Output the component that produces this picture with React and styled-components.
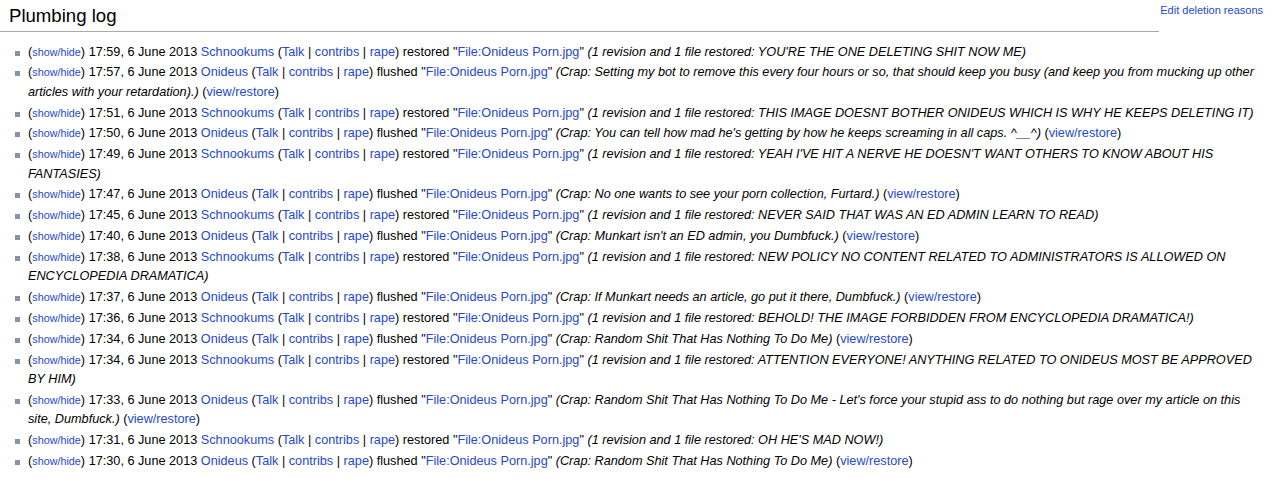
import React from 'react'
import styled, { createGlobalStyle } from 'styled-components'

const GlobalStyle = createGlobalStyle`
  html, body {
    margin: 0;
    padding: 0;
    background: #fff;
  }
  body {
    font-family: "Liberation Sans", Arial, Helvetica, sans-serif;
    color: #000;
  }
`

const LINK = '#2549cc'

const Page = styled.div`
  width: 1272px;
`

const Header = styled.div`
  display: flex;
  align-items: flex-start;
`

const Title = styled.h1`
  flex: 1;
  margin: 0;
  padding: 6px 0 5px 9px;
  font-size: 18.6px;
  line-height: 20px;
  font-weight: normal;
  border-bottom: 1px solid #aaa;
`

const SideLink = styled.a`
  margin: 0 9px 0 1px;
  padding-top: 4px;
  font-size: 11px;
  line-height: 13px;
  color: ${LINK};
  text-decoration: none;
  white-space: nowrap;
`

const LogList = styled.ul`
  list-style: none;
  margin: 10.5px 12px 0 0;
  padding: 0;
  font-size: 12.7px;
  line-height: 19.5px;
`

const Entry = styled.li`
  position: relative;
  padding-left: 28px;
  margin-bottom: 1.3px;

  &::before {
    content: '';
    position: absolute;
    left: 15px;
    top: 8px;
    width: 5px;
    height: 5px;
    background: #8596aa;
  }
`

const A = styled.a`
  color: ${LINK};
  text-decoration: none;
`

const Small = styled.span`
  font-size: 10.8px;
`

const Reason = styled.i`
  font-style: italic;
`

const entries = [
  ['17:59', 'Schnookums', 'restored', "(1 revision and 1 file restored: YOU'RE THE ONE DELETING SHIT NOW ME)", false],
  ['17:57', 'Onideus', 'flushed', '(Crap: Setting my bot to remove this every four hours or so, that should keep you busy (and keep you from mucking up other articles with your retardation).)', true],
  ['17:51', 'Schnookums', 'restored', '(1 revision and 1 file restored: THIS IMAGE DOESNT BOTHER ONIDEUS WHICH IS WHY HE KEEPS DELETING IT)', false],
  ['17:50', 'Onideus', 'flushed', "(Crap: You can tell how mad he's getting by how he keeps screaming in all caps. ^__^)", true],
  ['17:49', 'Schnookums', 'restored', "(1 revision and 1 file restored: YEAH I'VE HIT A NERVE HE DOESN'T WANT OTHERS TO KNOW ABOUT HIS FANTASIES)", false],
  ['17:47', 'Onideus', 'flushed', '(Crap: No one wants to see your porn collection, Furtard.)', true],
  ['17:45', 'Schnookums', 'restored', '(1 revision and 1 file restored: NEVER SAID THAT WAS AN ED ADMIN LEARN TO READ)', false],
  ['17:40', 'Onideus', 'flushed', "(Crap: Munkart isn't an ED admin, you Dumbfuck.)", true],
  ['17:38', 'Schnookums', 'restored', '(1 revision and 1 file restored: NEW POLICY NO CONTENT RELATED TO ADMINISTRATORS IS ALLOWED ON ENCYCLOPEDIA DRAMATICA)', false],
  ['17:37', 'Onideus', 'flushed', '(Crap: If Munkart needs an article, go put it there, Dumbfuck.)', true],
  ['17:36', 'Schnookums', 'restored', '(1 revision and 1 file restored: BEHOLD! THE IMAGE FORBIDDEN FROM ENCYCLOPEDIA DRAMATICA!)', false],
  ['17:34', 'Onideus', 'flushed', '(Crap: Random Shit That Has Nothing To Do Me)', true],
  ['17:34', 'Schnookums', 'restored', '(1 revision and 1 file restored: ATTENTION EVERYONE! ANYTHING RELATED TO ONIDEUS MOST BE APPROVED BY HIM)', false],
  ['17:33', 'Onideus', 'flushed', "(Crap: Random Shit That Has Nothing To Do Me - Let's force your stupid ass to do nothing but rage over my article on this site, Dumbfuck.)", true],
  ['17:31', 'Schnookums', 'restored', "(1 revision and 1 file restored: OH HE'S MAD NOW!)", false],
  ['17:30', 'Onideus', 'flushed', '(Crap: Random Shit That Has Nothing To Do Me)', true],
]

const LogEntry = ({ time, user, action, reason, restore }) => (
  <Entry>
    (<Small><A href="#">show/hide</A></Small>) {time}, 6 June 2013 <A href="#">{user}</A>{' '}
    (<A href="#">Talk</A> | <A href="#">contribs</A> | <A href="#">rape</A>) {action}{' '}
    "<A href="#">File:Onideus Porn.jpg</A>" <Reason>{reason}</Reason>
    {restore && <> (<A href="#">view/restore</A>)</>}
  </Entry>
)

export default function App() {
  return (
    <Page>
      <GlobalStyle />
      <Header>
        <Title>Plumbing log</Title>
        <SideLink href="#">Edit deletion reasons</SideLink>
      </Header>
      <LogList>
        {entries.map(([time, user, action, reason, restore], i) => (
          <LogEntry key={i} time={time} user={user} action={action} reason={reason} restore={restore} />
        ))}
      </LogList>
    </Page>
  )
}
